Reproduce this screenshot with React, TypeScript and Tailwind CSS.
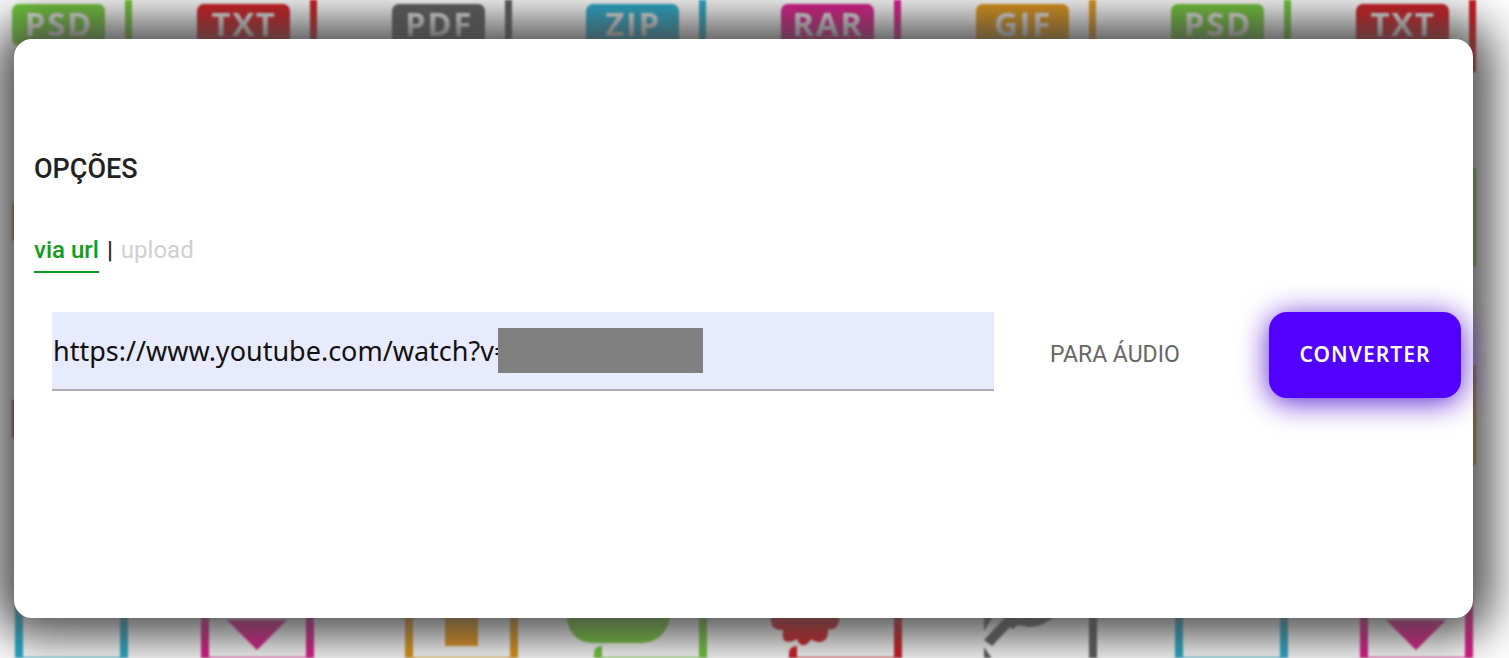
import { useState } from 'react';

const topFiles = [
  { x: 12, name: 'PSD', color: '#6cc832' },
  { x: 197, name: 'TXT', color: '#d01217' },
  { x: 392, name: 'PDF', color: '#595959' },
  { x: 586, name: 'ZIP', color: '#1fa9c9' },
  { x: 781, name: 'RAR', color: '#dd1287' },
  { x: 976, name: 'GIF', color: '#e0930f' },
  { x: 1171, name: 'PSD', color: '#6cc832' },
  { x: 1356, name: 'TXT', color: '#d01217' },
];

const bottomFiles = [
  { x: 15, color: '#1fa9c9', symbol: 'none' },
  { x: 201, color: '#dd1287', symbol: 'arrow' },
  { x: 405, color: '#e0930f', symbol: 'block' },
  { x: 594, color: '#6cc832', symbol: 'bubble' },
  { x: 789, color: '#d01217', symbol: 'gear' },
  { x: 984, color: '#595959', symbol: 'wrench' },
  { x: 1175, color: '#1fa9c9', symbol: 'none' },
  { x: 1360, color: '#dd1287', symbol: 'arrow' },
];

function FileSymbol({ kind }: { kind: string }) {
  if (kind === 'arrow') return <path d="M26 20H86L56 50Z" />;
  if (kind === 'block') return <path d="M40 0H73V46H40Z" />;
  if (kind === 'bubble') return <path d="M-30 0H77V14Q72 42 48 43H-2Q-25 42 -28 14Z" />;
  if (kind === 'gear')
    return (
      <path d="M-18 0H50V21Q48 31 39 29Q40 40 32 42Q25 42 22 39Q18 46 14 45Q10 45 8 39Q2 43 -4 41Q-7 39 -6 30Q-17 30 -18 22Z" />
    );
  if (kind === 'wrench')
    return (
      <>
        <path d="M0 0H19L0 31Z" />
        <path d="M8 46L0 40L30 8V0H72V15Q58 28 44 27Q36 24 32 26L29 29L26 27Z" />
        <path d="M0 47L9 60H0Z" />
        <rect x="105" y="-20" width="8" height="84" />
      </>
    );
  return null;
}

function Wallpaper() {
  return (
    <svg
      aria-hidden="true"
      className="absolute inset-0 h-full w-full blur-[1px]"
      viewBox="0 0 1509 658"
      preserveAspectRatio="xMidYMin slice"
    >
      {topFiles.map((file) => (
        <g key={file.x} fill={file.color}>
          <rect x={file.x} y="4" width="93" height="42" rx="7" />
          <rect x={file.x + 113} y="-20" width="7" height="92" />
          <text
            x={file.x + 47}
            y="36"
            fill="#eeeeee"
            textAnchor="middle"
            className="font-['Open_Sans',sans-serif] text-[33px] font-bold tracking-wider"
          >
            {file.name}
          </text>
        </g>
      ))}
      <rect x="1469" y="168" width="7" height="98" fill="#6cc832" />
      <rect x="12" y="203" width="7" height="38" fill="#e0930f" />
      <rect x="1469" y="365" width="7" height="100" fill="#e0930f" />
      <rect x="12" y="400" width="7" height="38" fill="#dd1287" />
      {bottomFiles.map((file) => (
        <g key={file.x} transform={`translate(${file.x} 600)`} fill={file.color}>
          {(file.symbol === 'bubble' || file.symbol === 'gear') && (
            <path
              d="M4 61V54Q4 50 8 50M109 0V61H4"
              fill="none"
              stroke={file.color}
              strokeWidth="8"
            />
          )}
          {(file.symbol === 'none' || file.symbol === 'arrow' || file.symbol === 'block') && (
            <rect x="4" y="-10" width="105" height="71" rx="5" fill="none" stroke={file.color} strokeWidth="8" />
          )}
          <FileSymbol kind={file.symbol} />
        </g>
      ))}
    </svg>
  );
}

export default function App() {
  const [mode, setMode] = useState('url');
  const [url, setUrl] = useState('https://www.youtube.com/watch?v=');
  const active = 'border-[#0f9d1c] text-[#0f9d1c]';
  const idle = 'border-transparent text-[#d0d0d0]';

  return (
    <div className="relative isolate min-h-screen overflow-hidden bg-white pt-[39px] pr-9 pb-10 pl-3.5 font-[Roboto,sans-serif]">
      <Wallpaper />
      <main className="relative rounded-[18px] bg-white pt-[110px] pr-3 pb-[220px] pl-5 shadow-[0_0_48px_18px_#484646]">
        <h1 className="text-[27px] leading-10 font-medium text-[#222222]">OPÇÕES</h1>
        <nav className="mt-[43px] flex items-start gap-2 text-2xl leading-9">
          <button
            type="button"
            onClick={() => setMode('url')}
            className={`border-b-2 pb-[3px] font-medium ${mode === 'url' ? active : idle}`}
          >
            via url
          </button>
          <span className="font-medium text-[#222222]">|</span>
          <button
            type="button"
            onClick={() => setMode('upload')}
            className={`border-b-2 pb-[3px] ${mode === 'upload' ? active : idle}`}
          >
            upload
          </button>
        </nav>
        <form className="mt-[39px] flex items-start pl-[18px]" onSubmit={(event) => event.preventDefault()}>
          <div className="relative min-w-0 flex-1">
            <input
              type="text"
              aria-label="URL"
              value={url}
              onChange={(event) => setUrl(event.target.value)}
              className="block h-[79px] w-full border-b-2 border-[#adadb2] bg-[#e8ebff] px-px font-['Noto_Sans',sans-serif] text-[27px] text-[#111111] outline-none"
            />
            <span className="absolute top-4 left-[446px] h-[45px] w-[205px] bg-[#808080]" />
          </div>
          <span className="ml-14 flex h-[86px] w-[219px] items-center text-[23px] text-[#666666]">
            PARA ÁUDIO
          </span>
          <button
            type="submit"
            className="h-[86px] w-48 rounded-[18px] bg-[#5200ff] font-['Noto_Sans',sans-serif] text-[21px] font-semibold tracking-wider text-white shadow-[0_4px_30px_#5a1fd0]"
          >
            CONVERTER
          </button>
        </form>
      </main>
    </div>
  );
}
